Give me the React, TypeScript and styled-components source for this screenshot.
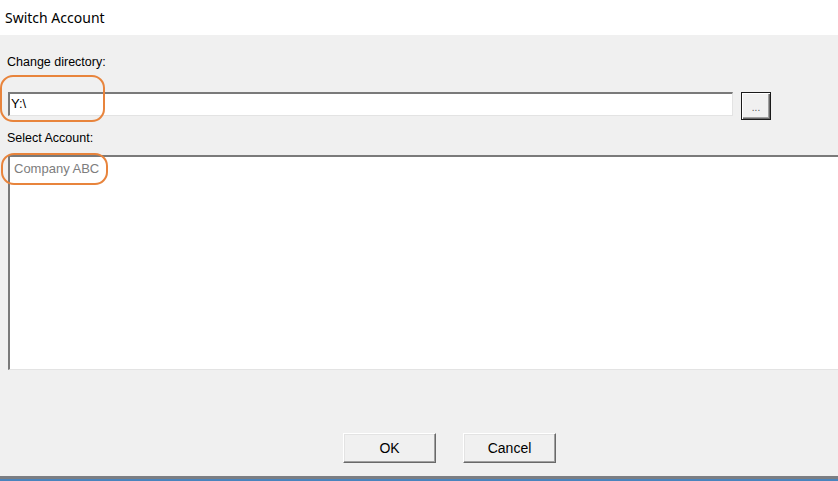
import React from "react";
import styled, { createGlobalStyle } from "styled-components";

const Global = createGlobalStyle`
  html, body { margin: 0; padding: 0; background: #ffffff; }
  body { font-family: "Liberation Sans", Arial, sans-serif; }
`;

const Window = styled.div`
  position: relative;
  width: 838px;
  height: 481px;
  display: flex;
  flex-direction: column;
  overflow: hidden;
  background: #f0f0f0;
`;

const TitleBar = styled.div`
  height: 35px;
  background: #ffffff;
  display: flex;
  align-items: center;
  padding-left: 5px;
  box-sizing: border-box;
  padding-bottom: 1px;
  font-family: "Noto Sans", "Open Sans", sans-serif;
  font-size: 14px;
  color: #000;
`;

const Body = styled.div`
  flex: 1;
  display: flex;
  flex-direction: column;
  padding-left: 8px;
  background: #f0f0f0;
`;

const Label = styled.div<{ $top: number }>`
  margin-top: ${(p) => p.$top}px;
  margin-left: -1px;
  height: 14px;
  line-height: 14px;
  font-size: 12.5px;
  color: #000;
`;

const Row = styled.div`
  margin-top: 23px;
  display: flex;
  align-items: flex-start;
  gap: 8px;
  height: 28px;
`;

const TextBox = styled.div`
  width: 725px;
  height: 24px;
  box-sizing: border-box;
  background: #fff;
  border-top: 2px solid #7a7a7a;
  border-left: 2px solid #7a7a7a;
  border-right: 1px solid #e3e3e3;
  border-bottom: 1px solid #e3e3e3;
  font-size: 13px;
  line-height: 20px;
  padding-left: 1px;
  color: #000;
`;

const BrowseButton = styled.div`
  width: 30px;
  height: 28px;
  box-sizing: border-box;
  border: 1px solid #1a1a1a;
  background: #f0f0f0;
  box-shadow: inset 1px 1px 0 #ffffff, inset -1px -1px 0 #696969,
    inset -2px -2px 0 #a0a0a0;
  display: flex;
  align-items: center;
  justify-content: center;
  font-size: 10px;
  color: #555;
  padding-top: 2px;
`;

const ListBox = styled.div`
  margin-top: 10px;
  width: 840px;
  height: 215px;
  box-sizing: border-box;
  background: #fff;
  border-top: 2px solid #7a7a7a;
  border-left: 2px solid #7a7a7a;
  border-bottom: 1px solid #e3e3e3;
  padding: 4px 0 0 4px;
`;

const ListItem = styled.div`
  font-size: 13px;
  line-height: 16px;
  color: #7d7d7d;
`;

const Spacer = styled.div`
  flex: 1;
`;

const ButtonRow = styled.div`
  display: flex;
  gap: 27px;
  padding-left: 335px;
  margin-bottom: 13px;
`;

const PushButton = styled.div`
  width: 93px;
  height: 30px;
  box-sizing: border-box;
  background: #f0f0f0;
  border-top: 1px solid #ffffff;
  border-left: 1px solid #ffffff;
  border-right: 1px solid #696969;
  border-bottom: 1px solid #696969;
  box-shadow: inset -1px -1px 0 #a0a0a0, inset 1px 1px 0 #e3e3e3;
  display: flex;
  align-items: center;
  justify-content: center;
  font-size: 14px;
  color: #000;
`;

const BottomEdge = styled.div`
  height: 5px;
  border-top: 3px solid #7b7e83;
  background: #4a84bd;
  box-sizing: border-box;
`;

const Annotation = styled.div<{ $x: number; $y: number; $w: number; $h: number }>`
  position: absolute;
  left: ${(p) => p.$x}px;
  top: ${(p) => p.$y}px;
  width: ${(p) => p.$w}px;
  height: ${(p) => p.$h}px;
  box-sizing: border-box;
  border: 2px solid #e8843c;
  border-radius: 13px;
  pointer-events: none;
`;

export default function App() {
  return (
    <>
      <Global />
      <Window>
        <TitleBar>Switch Account</TitleBar>
        <Body>
          <Label $top={20}>Change directory:</Label>
          <Row>
            <TextBox>Y:\</TextBox>
            <BrowseButton>...</BrowseButton>
          </Row>
          <Label $top={11}>Select Account:</Label>
          <ListBox>
            <ListItem>Company ABC</ListItem>
          </ListBox>
          <Spacer />
          <ButtonRow>
            <PushButton>OK</PushButton>
            <PushButton>Cancel</PushButton>
          </ButtonRow>
        </Body>
        <BottomEdge />
        <Annotation $x={0} $y={75} $w={105} $h={47} />
        <Annotation $x={1} $y={153} $w={107} $h={32} />
      </Window>
    </>
  );
}
